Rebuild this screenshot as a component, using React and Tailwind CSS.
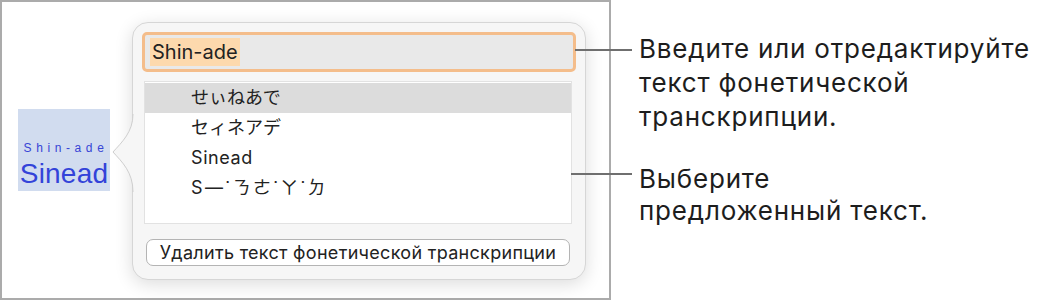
import React from "react";

const sans = { fontFamily: "Inter, 'Noto Sans CJK JP', sans-serif" };

export default function App() {
  return (
    <div
      className="w-[1045px] h-[301px] bg-white flex text-[#1d1d1d] overflow-hidden"
      style={sans}
    >
      {/* left canvas */}
      <div className="w-[611px] h-[300px] shrink-0 border-2 border-[#ababab] flex items-center pl-[16px] relative z-0">
        {/* selected word */}
        <div className="w-[92px] h-[82px] bg-[#d1dcef] flex flex-col items-center justify-start pt-[32px]">
          <div
            className="text-[12px] leading-[14px] tracking-[4.6px] pl-[4px] text-[#3745d6]"
            style={{ fontFamily: "'Liberation Sans', sans-serif" }}
          >
            Shin-ade
          </div>
          <div
            className="text-[28px] leading-[34px] mt-[2px] tracking-[0.2px] text-[#3343d9]"
            style={{ fontFamily: "'Liberation Sans', sans-serif" }}
          >
            Sinead
          </div>
        </div>

        {/* popover */}
        <div className="relative ml-[22px] mt-[1px] w-[454px] h-[258px] bg-[#f6f6f6] border border-[#d6d6d6] rounded-[16px] shadow-[0_4px_18px_rgba(0,0,0,0.14)] flex flex-col pt-[9px] pl-[9px] pr-[9px]">
          {/* arrow */}
          <svg
            className="absolute left-[-21px] top-[91px]"
            width="23"
            height="78"
            viewBox="0 0 23 78"
          >
            <path
              d="M21 0 C21 18, 10 28, 1 38 C10 48, 21 58, 21 78 L23 78 L23 0 Z"
              fill="#f6f6f6"
            />
            <path
              d="M21 0 C21 18, 10 28, 1 38 C10 48, 21 58, 21 78"
              fill="none"
              stroke="#cfcfcf"
              strokeWidth="1"
            />
          </svg>

          {/* input */}
          <div className="h-[40px] w-[434px] border-[3px] border-[#f4bd8b] rounded-[5px] bg-[#e9e9e9] flex items-center pl-[5px]">
            <span className="bg-[#fdd9ad] text-[20px] leading-[28px] px-[2px] text-[#222]">
              Shin-ade
            </span>
          </div>

          {/* list */}
          <div className="mt-[9px] ml-[2px] w-[428px] h-[143px] bg-white border border-[#e2e2e2] pt-[1px] text-[18px] text-[#222]">
            <div className="h-[30px] bg-[#dcdcdc] flex items-center pl-[46px]">せぃねあで</div>
            <div className="h-[30px] flex items-center pl-[46px]">セィネアデ</div>
            <div className="h-[30px] flex items-center pl-[46px] tracking-[0.6px]">Sinead</div>
            <div className="h-[30px] flex items-center pl-[46px] tracking-[2.5px]">S—˙ㄋㄜ˙ㄚ˙ㄉ</div>
          </div>

          {/* button */}
          <div className="mt-[15px] ml-[4px] w-[424px] h-[27px] bg-white border border-[#b4b4b4] rounded-[7px] flex items-center justify-center text-[18px] tracking-[0.3px] text-[#222]">
            Удалить текст фонетической транскрипции
          </div>
        </div>
      </div>

      {/* callouts */}
      <div className="flex flex-col relative z-10">
        <div className="flex items-start mt-[32px]">
          <div className="w-[57px] h-[2px] bg-[#6f6f6f] ml-[-36px] mt-[17px] shrink-0" />
          <div className="ml-[7px] text-[26px] leading-[34px] tracking-[0.8px]">
            Введите или отредактируйте
            <br />
            текст фонетической
            <br />
            транскрипции.
          </div>
        </div>
        <div className="flex items-start mt-[29px]">
          <div className="w-[61px] h-[2px] bg-[#6f6f6f] ml-[-40px] mt-[10px] shrink-0" />
          <div className="ml-[7px] text-[26px] leading-[32px] tracking-[0.8px]">
            Выберите
            <br />
            предложенный текст.
          </div>
        </div>
      </div>
    </div>
  );
}
